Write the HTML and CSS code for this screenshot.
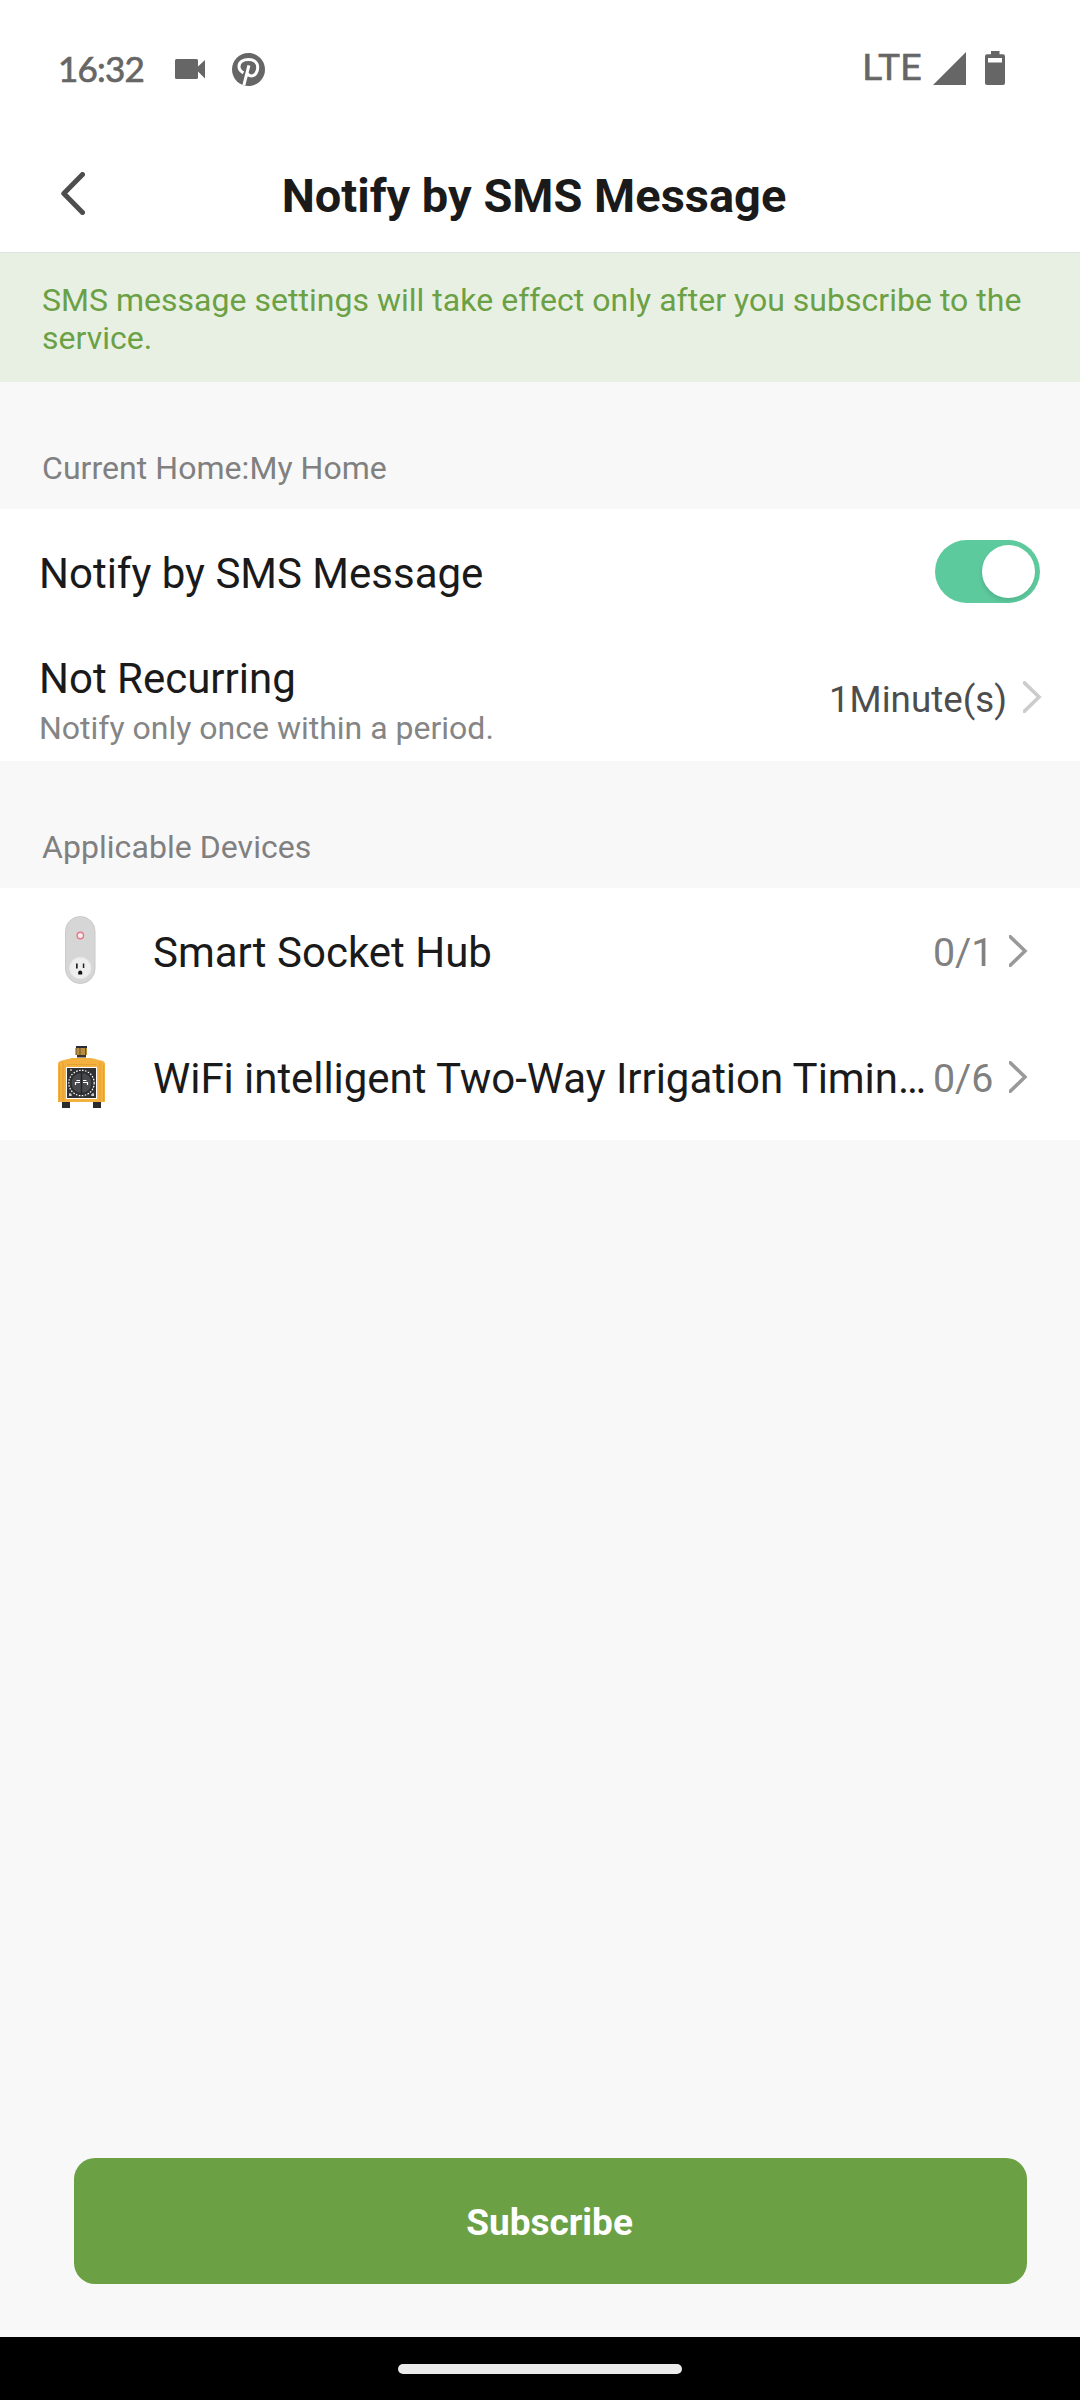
FILE: index.html
```html
<!DOCTYPE html>
<html lang="en">
<head>
    <meta charset="UTF-8">
    <meta name="viewport" content="width=device-width, initial-scale=1.0">
    <title>Notify by SMS Message</title>
    <link rel="stylesheet" href="styles.css">
</head>
<body>
    <div class="status-bar">
        <div class="status-left">
            <span class="clock">16:32</span>
            <svg class="icon-video" width="30" height="20" viewBox="0 0 30 20">
                <path d="M1.5 0h20A1.5 1.5 0 0 1 23 1.5V7.5L30 1V19.500L23 12.500V18.500A1.500 1.500 0 0 1 21.500 20H1.500A1.500 1.500 0 0 1 0 18.500V1.500A1.500 1.500 0 0 1 1.500 0z" fill="#666"/>
            </svg>
            <svg class="icon-pinterest" width="33" height="33" viewBox="0 0 24 24">
                <path d="M12 0C5.373 0 0 5.373 0 12s5.373 12 12 12 12-5.373 12-12S18.627 0 12 0z" fill="#666"/>
                <path d="M8.300 14.500C6.200 13.300 5.100 11.700 5.100 9.900C5.100 6.600 8.100 4.700 12.100 4.700C16 4.700 18.700 7 18.700 10.600C18.700 14 16.700 16.700 14.100 16.700C12.500 16.700 11.500 15.900 11.300 14.800M12.300 9L8.600 23.600" fill="none" stroke="#fff" stroke-width="2.200"/>
            </svg>
        </div>
        <div class="status-right">
            <span class="network">LTE</span>
            <svg class="icon-signal" width="33" height="33" viewBox="0 0 33 33">
                <path d="M0 33L33 0V33z" fill="#666"/>
            </svg>
            <svg class="icon-battery" width="20" height="34" viewBox="0 0 20 34">
                <path d="M6 0h8.500v3.300H18a2 2 0 0 1 2 2V32a2 2 0 0 1-2 2H2a2 2 0 0 1-2-2V5.300a2 2 0 0 1 2-2h4zM3 7v4.500h14V7z" fill="#666" fill-rule="evenodd"/>
            </svg>
        </div>
    </div>

    <div class="nav-bar">
        <svg class="icon-back" width="24" height="43" viewBox="0 0 24 43">
            <path d="M21.500 2.500L2.800 21.500L21.500 40.500" fill="none" stroke="#4d4d4d" stroke-width="5" stroke-linecap="round" stroke-linejoin="round"/>
        </svg>
        <h1>Notify by SMS Message</h1>
    </div>

    <div class="notice">SMS message settings will take effect only after you subscribe to the service.</div>

    <div class="content">
        <h2 class="section-title">Current Home:My Home</h2>
        <div class="list">
            <div class="row">
                <span class="label">Notify by SMS Message</span>
                <div class="switch"><div class="knob"></div></div>
            </div>
            <div class="row">
                <div class="label-group">
                    <span class="label">Not Recurring</span>
                    <span class="hint">Notify only once within a period.</span>
                </div>
                <span class="value">1Minute(s)</span>
                <svg class="chevron light" width="19" height="32" viewBox="0 0 19 32">
                    <path d="M0 0.500L16 16L0 31.500" fill="none" stroke="currentColor" stroke-width="3.700"/>
                </svg>
            </div>
        </div>

        <h2 class="section-title">Applicable Devices</h2>
        <div class="list">
            <div class="row device">
                <svg class="device-icon" width="48" height="72" viewBox="0 0 48 72">
                    <rect x="7.500" y="2.500" width="29.500" height="67" rx="14.750" fill="#d6d6d6" stroke="#cacaca"/>
                    <circle cx="22.300" cy="21.500" r="3.200" fill="#f8efef" stroke="#e4778a" stroke-width="1.400"/>
                    <circle cx="22.300" cy="54" r="10.800" fill="#eee" stroke="#e3e3e3" stroke-width="0.800"/>
                    <path d="M18 49.500h1.700v5h-1.700zM24.800 49.500h1.500v4.500h-1.500z" fill="#222"/>
                    <path d="M20.200 58.500a2 2 0 0 1 4 0v2h-4z" fill="#111"/>
                </svg>
                <span class="label">Smart Socket Hub</span>
                <span class="count">0/1</span>
                <svg class="chevron" width="19" height="32" viewBox="0 0 19 32">
                    <path d="M0 0.500L16 16L0 31.500" fill="none" stroke="currentColor" stroke-width="3.500"/>
                </svg>
            </div>
            <div class="row device">
                <svg class="device-icon" width="48" height="72" viewBox="0 0 48 72">
                    <rect x="18" y="6" width="11" height="2" fill="#272b35"/>
                    <rect x="18" y="8" width="11" height="7" fill="#b98d3e"/>
                    <path d="M18 8v7M22 8v7M27.500 8v7" stroke="#6b512b" stroke-width="1"/>
                    <rect x="19" y="15" width="9" height="2.500" fill="#3a3026"/>
                    <rect x="4" y="61" width="8" height="7" fill="#2b2b2e"/>
                    <rect x="35" y="61" width="8" height="7" fill="#2b2b2e"/>
                    <path d="M0 24Q0 21 4 20.500L14 18H33L43 20.500Q47 21 47 24V62H0z" fill="#f4b140"/>
                    <path d="M1.500 25V61M5 22V61M42 22V61M45.500 25V61M9 24.500H38" stroke="#df9d31" stroke-width="0.800"/>
                    <rect x="8.500" y="27.500" width="30" height="31" fill="#303133" stroke="#fff"/>
                    <circle cx="23.500" cy="43" r="12.700" fill="none" stroke="#fff" stroke-width="1.200" stroke-dasharray="1.500 1.500"/>
                    <circle cx="23.500" cy="43" r="10.500" fill="#47494d" stroke="#292a2c"/>
                    <path d="M23.500 32.500v21" stroke="#222" stroke-width="1.500"/>
                    <path d="M17.500 45v-2.500h4.500M25 42.500h4.500v2.500M18.500 40.500h3.500M25 40.500h3.500" fill="none" stroke="#fff" stroke-width="1.200"/>
                    <path d="M11 55h3M33 55h3M12 53v3M35 53v3M12 30h2" stroke="#fff" stroke-width="1"/>
                </svg>
                <span class="label long">WiFi intelligent Two-Way Irrigation Timin…</span>
                <span class="count">0/6</span>
                <svg class="chevron" width="19" height="32" viewBox="0 0 19 32">
                    <path d="M0 0.500L16 16L0 31.500" fill="none" stroke="currentColor" stroke-width="3.500"/>
                </svg>
            </div>
        </div>
    </div>

    <div class="footer">
        <button class="subscribe">Subscribe</button>
    </div>

    <div class="gesture-bar">
        <div class="gesture-handle"></div>
    </div>
</body>
</html>
```

FILE: styles.css
```css
* {
    box-sizing: border-box;
}
body {
    margin: 0;
    height: 2400px;
    font-family: Roboto, sans-serif;
    background-color: #f8f8f8;
    color: #1a1a1a;
    display: flex;
    flex-direction: column;
    overflow: hidden;
}
svg {
    display: block;
    flex-shrink: 0;
}
.status-bar {
    height: 136px;
    padding: 0 75px 0 58px;
    background-color: #fff;
    color: #666;
    display: flex;
    justify-content: space-between;
    align-items: center;
}
.status-left, .status-right {
    display: flex;
    align-items: center;
}
.clock {
    width: 117px;
    font-family: Lato, sans-serif;
    font-size: 35px;
    letter-spacing: -0.8px;
    line-height: 40px;
    -webkit-text-stroke: 0.7px #666;
}
.icon-video {
    margin-top: 2px;
}
.icon-pinterest {
    margin-left: 27px;
    margin-top: 2px;
}
.network {
    font-size: 37px;
    letter-spacing: 0.5px;
    line-height: 40px;
    -webkit-text-stroke: 0.7px #666;
}
.icon-signal {
    margin-left: 11px;
}
.icon-battery {
    margin-left: 19px;
}
.nav-bar {
    height: 117px;
    padding-left: 61px;
    background-color: #fff;
    border-bottom: 1px solid #e2e2e2;
    display: flex;
    align-items: center;
}
.icon-back {
    margin-bottom: 2px;
}
.nav-bar h1 {
    flex: 1;
    margin: 3px 97px 0 0;
    font-size: 47px;
    line-height: 56px;
    text-align: center;
}
.notice {
    height: 129px;
    padding: 28px 42px 0;
    background-color: #e8f0e4;
    color: #6ba144;
    font-size: 32px;
    letter-spacing: 0.02px;
    line-height: 38px;
}
.content {
    flex: 1;
}
.section-title {
    height: 127px;
    margin: 0;
    padding: 67px 42px 0;
    color: #808080;
    font-size: 32px;
    font-weight: 400;
    letter-spacing: 0.05px;
    line-height: 38px;
}
.list {
    background-color: #fff;
}
.row {
    height: 126px;
    padding: 0 39px;
    display: flex;
    align-items: center;
}
.label {
    flex: 1;
    padding-top: 3px;
    font-size: 42px;
    line-height: 50px;
}
.label-group {
    flex: 1;
    display: flex;
    flex-direction: column;
    padding-top: 5px;
}
.label-group .label {
    padding-top: 0;
}
.hint {
    color: #858585;
    font-size: 32px;
    line-height: 38px;
    padding-top: 5px;
}
.switch {
    width: 105px;
    height: 63px;
    margin: 0 1px 1px 0;
    padding: 5px;
    border-radius: 32px;
    background-color: #5dca9e;
    display: flex;
    justify-content: flex-end;
    overflow: hidden;
}
.knob {
    width: 53px;
    height: 53px;
    border-radius: 50%;
    background-color: #fff;
    box-shadow: -1px 3px 4px rgba(0, 0, 0, 0.1);
}
.value {
    padding-top: 3px;
    color: #4d4d4d;
    font-size: 36.750px;
    line-height: 44px;
}
.chevron {
    margin-left: 16px;
    color: #999;
}
.chevron.light {
    margin-right: -1px;
    margin-bottom: 2px;
    color: #ccc;
}
.device {
    padding: 0 52px 0 58px;
}
.device-icon {
    margin-top: -2px;
    margin-right: 47px;
}
.device .label {
    min-width: 0;
    white-space: nowrap;
}
.device .label.long {
    letter-spacing: -0.05px;
}
.count {
    width: 59px;
    margin-left: 5px;
    margin-right: 1px;
    color: #808080;
    font-size: 39.375px;
    line-height: 46px;
    padding-top: 3px;
}
.footer {
    height: 179px;
    padding: 0 53px 0 74px;
}
.subscribe {
    display: block;
    width: 100%;
    height: 126px;
    padding: 2px 2px 0 0;
    border: none;
    border-radius: 21px;
    background-color: #6ba144;
    color: #fff;
    font-family: inherit;
    font-size: 37px;
    font-weight: 700;
}
.gesture-bar {
    height: 63px;
    padding-top: 27px;
    background-color: #000;
}
.gesture-handle {
    width: 284px;
    height: 10px;
    margin: 0 auto;
    border-radius: 5px;
    background-color: #ebebeb;
}
```
